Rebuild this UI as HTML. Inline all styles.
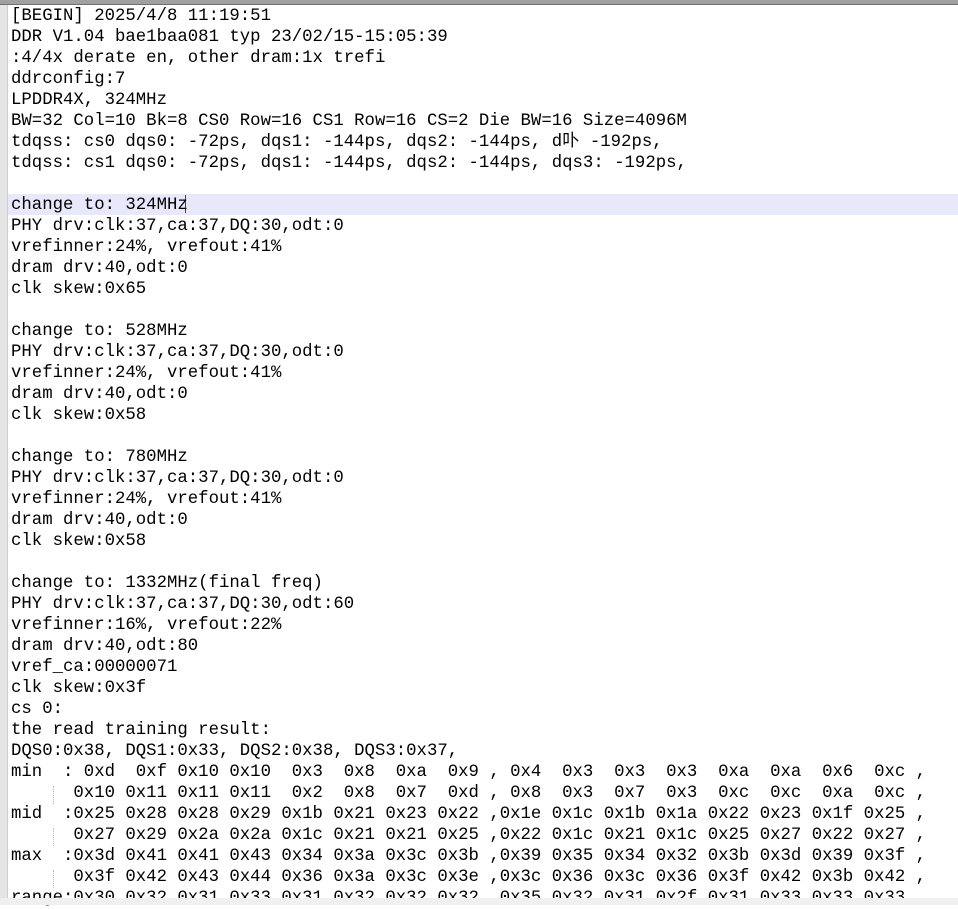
<!DOCTYPE html>
<html><head><meta charset="utf-8"><style>
html,body{margin:0;padding:0;width:958px;height:905px;overflow:hidden;background:#fff;}
.top{position:absolute;left:0;top:0;width:958px;height:4px;background:#a0a0a0;border-bottom:1px solid #707070;}
.gut{position:absolute;left:0;top:5px;width:7px;height:893px;background:#e4e4e4;border-right:1px solid #d0d0d0;}
.hl{position:absolute;left:8px;top:194px;width:950px;height:21px;background:#e8e8fa;}
.caret{position:absolute;left:185px;top:195px;width:1px;height:18px;background:#8000ff;}
pre{position:absolute;left:11px;top:6px;margin:0;font-family:"Liberation Mono","Noto Sans CJK SC",monospace;font-size:17.33px;line-height:21px;color:#000;}
.g{position:absolute;left:53px;width:0;height:18px;border-left:1px dotted #b8b8b8;}
.bot{position:absolute;left:0;top:898px;width:958px;height:7px;background:#f0f0f0;}
</style></head><body>
<div class="top"></div>
<div class="gut"></div>
<div class="hl"></div>
<div class="caret"></div>
<div class="g" style="top:786px"></div>
<div class="g" style="top:828px"></div>
<div class="g" style="top:870px"></div>
<pre>[BEGIN] 2025/4/8 11:19:51
DDR V1.04 bae1baa081 typ 23/02/15-15:05:39
:4/4x derate en, other dram:1x trefi
ddrconfig:7
LPDDR4X, 324MHz
BW=32 Col=10 Bk=8 CS0 Row=16 CS1 Row=16 CS=2 Die BW=16 Size=4096M
tdqss: cs0 dqs0: -72ps, dqs1: -144ps, dqs2: -144ps, d卟 -192ps,
tdqss: cs1 dqs0: -72ps, dqs1: -144ps, dqs2: -144ps, dqs3: -192ps,

change to: 324MHz
PHY drv:clk:37,ca:37,DQ:30,odt:0
vrefinner:24%, vrefout:41%
dram drv:40,odt:0
clk skew:0x65

change to: 528MHz
PHY drv:clk:37,ca:37,DQ:30,odt:0
vrefinner:24%, vrefout:41%
dram drv:40,odt:0
clk skew:0x58

change to: 780MHz
PHY drv:clk:37,ca:37,DQ:30,odt:0
vrefinner:24%, vrefout:41%
dram drv:40,odt:0
clk skew:0x58

change to: 1332MHz(final freq)
PHY drv:clk:37,ca:37,DQ:30,odt:60
vrefinner:16%, vrefout:22%
dram drv:40,odt:80
vref_ca:00000071
clk skew:0x3f
cs 0:
the read training result:
DQS0:0x38, DQS1:0x33, DQS2:0x38, DQS3:0x37,
min  : 0xd  0xf 0x10 0x10  0x3  0x8  0xa  0x9 , 0x4  0x3  0x3  0x3  0xa  0xa  0x6  0xc ,
      0x10 0x11 0x11 0x11  0x2  0x8  0x7  0xd , 0x8  0x3  0x7  0x3  0xc  0xc  0xa  0xc ,
mid  :0x25 0x28 0x28 0x29 0x1b 0x21 0x23 0x22 ,0x1e 0x1c 0x1b 0x1a 0x22 0x23 0x1f 0x25 ,
      0x27 0x29 0x2a 0x2a 0x1c 0x21 0x21 0x25 ,0x22 0x1c 0x21 0x1c 0x25 0x27 0x22 0x27 ,
max  :0x3d 0x41 0x41 0x43 0x34 0x3a 0x3c 0x3b ,0x39 0x35 0x34 0x32 0x3b 0x3d 0x39 0x3f ,
      0x3f 0x42 0x43 0x44 0x36 0x3a 0x3c 0x3e ,0x3c 0x36 0x3c 0x36 0x3f 0x42 0x3b 0x42 ,
range:0x30 0x32 0x31 0x33 0x31 0x32 0x32 0x32 ,0x35 0x32 0x31 0x2f 0x31 0x33 0x33 0x33 ,</pre>
<div class="bot"></div>
</body></html>
